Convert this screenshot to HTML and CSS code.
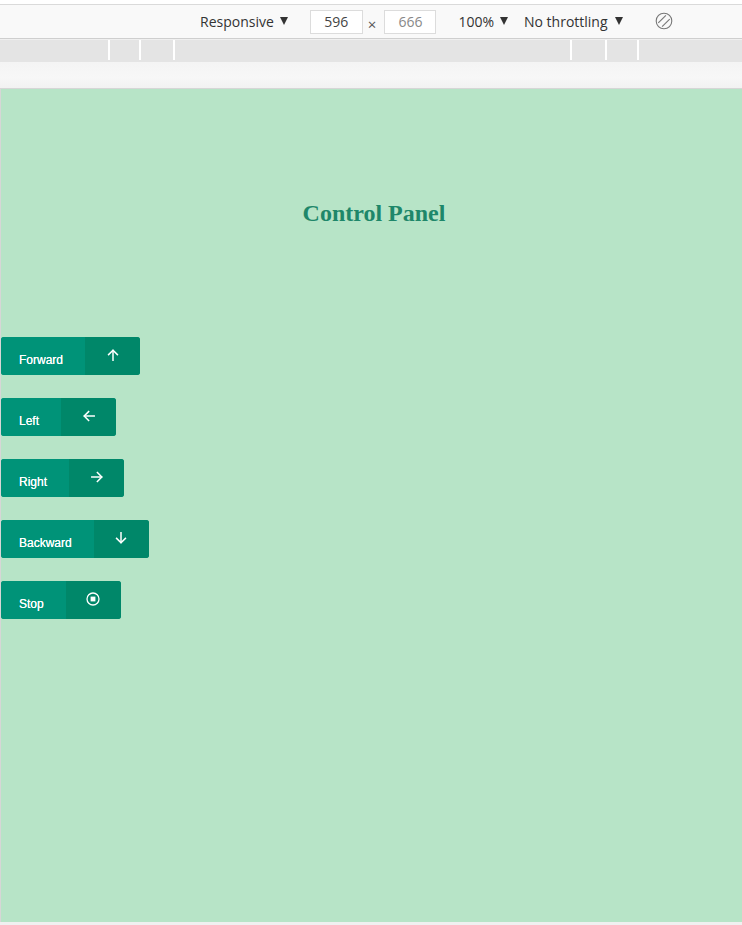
FILE: index.html
```html
<!DOCTYPE html>
<html lang="en">
<head>
<meta charset="utf-8">
<title>Control Panel</title>
<link rel="stylesheet" href="styles.css">
</head>
<body>
<div class="chrome-top"></div>
<div class="toolbar">
  <span class="tb-item tb-resp">Responsive<i class="caret"></i></span>
  <span class="tb-box">596</span>
  <span class="tb-x">×</span>
  <span class="tb-box tb-muted">666</span>
  <span class="tb-item tb-zoom">100%<i class="caret"></i></span>
  <span class="tb-item tb-throttle">No throttling<i class="caret"></i></span>
  <svg class="tb-rotate" width="18" height="18" viewBox="0 0 18 18" fill="none" stroke="#777" stroke-width="1.1">
    <circle cx="9" cy="9" r="7.8"/>
    <path d="M3.3 10.9 10.9 3.3"/>
    <path d="M7.1 14.7 14.7 7.1"/>
  </svg>
</div>
<div class="ruler">
  <span class="seg s1"></span>
  <span class="seg s2"></span>
  <span class="seg s3"></span>
  <span class="seg s4"></span>
  <span class="seg s5"></span>
  <span class="seg s6"></span>
  <span class="seg s7"></span>
</div>
<div class="shade"></div>
<main class="viewport">
  <h2 class="title">Control Panel</h2>
  <div class="controls">
    <button class="ctl"><span class="label">Forward</span><span class="icon">
      <svg width="12" height="12" viewBox="0 0 12 12" fill="none" stroke="#fff" stroke-width="1.5" stroke-linecap="square"><path d="M6 11.2V1.5"/><path d="M1.6 5.6 6 1.2l4.4 4.4"/></svg>
    </span></button>
    <button class="ctl"><span class="label">Left</span><span class="icon">
      <svg width="12" height="12" viewBox="0 0 12 12" fill="none" stroke="#fff" stroke-width="1.5" stroke-linecap="square"><path d="M11.2 6H1.5"/><path d="M5.6 1.6 1.2 6l4.4 4.4"/></svg>
    </span></button>
    <button class="ctl"><span class="label">Right</span><span class="icon">
      <svg width="12" height="12" viewBox="0 0 12 12" fill="none" stroke="#fff" stroke-width="1.5" stroke-linecap="square"><path d="M0.8 6H10.5"/><path d="M6.4 1.6 10.8 6l-4.4 4.4"/></svg>
    </span></button>
    <button class="ctl"><span class="label">Backward</span><span class="icon">
      <svg width="12" height="12" viewBox="0 0 12 12" fill="none" stroke="#fff" stroke-width="1.5" stroke-linecap="square"><path d="M6 0.8V10.5"/><path d="M1.6 6.4 6 10.8l4.4-4.4"/></svg>
    </span></button>
    <button class="ctl"><span class="label">Stop</span><span class="icon">
      <svg width="14" height="14" viewBox="0 0 14 14"><circle cx="7" cy="7" r="6" fill="none" stroke="#fff" stroke-width="1.3"/><rect x="4.6" y="4.6" width="4.8" height="4.8" fill="#fff"/></svg>
    </span></button>
  </div>
</main>
</body>
</html>
```

FILE: styles.css
```css
html, body {
  margin: 0;
  padding: 0;
}
body {
  background: #f0f0f0;
  font-family: "Open Sans", "Noto Sans", sans-serif;
}
.chrome-top {
  height: 4px;
  background: #ffffff;
  border-bottom: 1px solid #dadada;
}
.toolbar {
  height: 34px;
  background: #f9f9f9;
  border-bottom: 1px solid #cfcfcf;
  display: flex;
  align-items: center;
  font-size: 14px;
  color: #333;
  box-sizing: border-box;
  padding-left: 200px;
}
.tb-item {
  display: flex;
  align-items: center;
  white-space: nowrap;
}
.caret {
  display: inline-block;
  width: 0;
  height: 0;
  border-left: 4px solid transparent;
  border-right: 4px solid transparent;
  border-top: 8px solid #333;
  margin-left: 6px;
  margin-top: -2px;
}
.tb-box {
  box-sizing: border-box;
  width: 53px;
  height: 24px;
  margin-left: 22px;
  background: #fff;
  border: 1px solid #dcdcdc;
  display: flex;
  align-items: center;
  justify-content: center;
  font-size: 14px;
  color: #444;
}
.tb-x {
  margin: 5px 8px 0 5px;
  color: #555;
  font-size: 15px;
}
.tb-box.tb-muted {
  margin-left: 0;
  width: 52px;
  color: #888;
}
.tb-zoom {
  margin-left: 22px;
}
.tb-throttle {
  margin-left: 16px;
}
.tb-throttle .caret {
  margin-left: 7px;
}
.tb-rotate {
  margin-left: 32px;
  margin-top: -1px;
}
.ruler {
  margin-top: 1px;
  height: 22px;
  background: #e4e4e4;
  display: flex;
}
.seg {
  height: 20px;
  border-right: 2px solid #fff;
  flex: none;
}
.s1 { width: 106px; margin-left: 2px; }
.s2 { width: 29px; }
.s3 { width: 32px; }
.s4 { width: 395px; }
.s5 { width: 33px; }
.s6 { width: 30px; }
.s7 { border-right: none; flex: 1; }
.shade {
  height: 26px;
  background: linear-gradient(#f4f4f4, #f7f7f7 60%, #f2f2f2);
}
.viewport {
  display: block;
  box-sizing: border-box;
  height: 834px;
  border-top: 1px solid #d6d6d6;
  border-left: 1px solid #d6d6d6;
  background: #b7e4c7;
}
.title {
  margin: 0;
  padding: 111px 0 0 5px;
  font-family: "Liberation Serif", "Times New Roman", serif;
  font-size: 24px;
  line-height: 27px;
  font-weight: bold;
  text-align: center;
  color: #1e876a;
}
.controls {
  margin-top: 110px;
  display: flex;
  flex-direction: column;
  align-items: flex-start;
  gap: 23px;
}
.ctl {
  display: flex;
  height: 38px;
  padding: 0;
  border: none;
  border-radius: 3px;
  overflow: hidden;
  background: #009378;
  font-family: "Liberation Sans", Arial, sans-serif;
  cursor: pointer;
}
.label {
  box-sizing: border-box;
  height: 38px;
  padding: 8px 22px 0 18px;
  display: flex;
  align-items: center;
  font-size: 12px;
  line-height: 14px;
  color: #fff;
  background: #009378;
  text-shadow: 0 0 0.4px #fff;
}
.icon {
  width: 55px;
  height: 38px;
  display: flex;
  align-items: center;
  justify-content: center;
  background: #008769;
}
.icon svg {
  display: block;
  margin-top: -2px;
}
```
